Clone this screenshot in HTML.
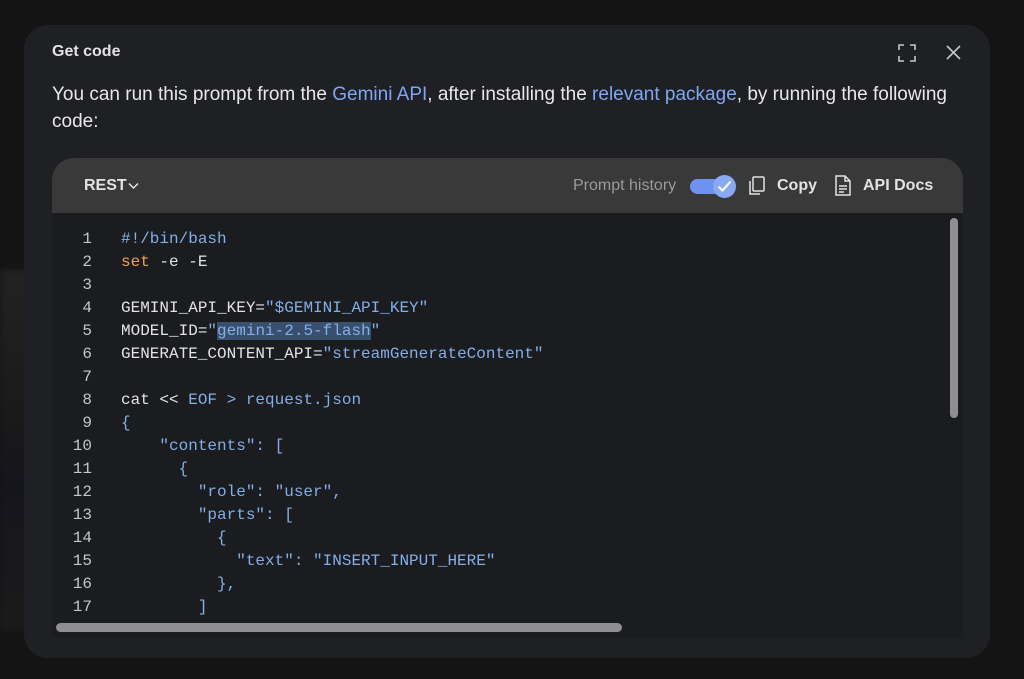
<!DOCTYPE html>
<html><head><meta charset="utf-8"><style>
*{margin:0;padding:0;box-sizing:border-box}
body{width:1024px;height:679px;background:#141414;font-family:"Liberation Sans",sans-serif;position:relative;overflow:hidden}
.blur{position:absolute;left:0;top:270px;width:30px;height:360px;background:linear-gradient(#222 0,#1a1a1a 40%,#15151c 60%,#1b1b1b 100%);filter:blur(3px)}
.dlg{position:absolute;left:24px;top:25px;width:966px;height:633px;background:#1f2023;border-radius:24px;overflow:hidden}
.title{position:absolute;left:28px;top:18px;font-size:16px;font-weight:bold;color:#e3e3e3}
.p{position:absolute;left:28px;top:56px;width:900px;font-size:19px;line-height:27px;color:#e8e8e8}
.p a{text-decoration:none;color:#7fa6f5}
.blk{position:absolute;left:28px;top:133px;width:911px;height:480px;background:#1b1c1f;border-radius:22px 22px 0 0;overflow:hidden}
.hdr{position:absolute;left:0;top:0;width:911px;height:55px;background:#393939}
.hdr span{position:absolute;top:19px;font-size:16px}
.view{position:absolute;left:0;top:55px;width:911px;height:405px;overflow:hidden}
.code{position:absolute;left:0;top:15px;font-family:"Liberation Mono",monospace;font-size:16px;line-height:23px;color:#e3e3e3;white-space:pre}
.ln{position:absolute;left:0;width:40px;text-align:right;color:#c4c7c5}
.b{color:#83aee8}.o{color:#f0a35c}
.hl{background:#38506e}
</style></head><body>
<div class="blur"></div>
<div class="dlg">
<div class="title">Get code</div>
<svg style="position:absolute;left:874px;top:19px" width="18" height="18" viewBox="0 0 18 18" fill="none" stroke="#c4c7c5" stroke-width="1.6"><path d="M1 6V1h5M12 1h5v5M17 12v5h-5M6 17H1v-5"/></svg>
<svg style="position:absolute;left:922px;top:20px" width="15" height="15" viewBox="0 0 15 15" stroke="#c4c7c5" stroke-width="1.6"><path d="M1 1l13 13M14 1L1 14"/></svg>
<div class="p">You can run this prompt from the <a>Gemini API</a>, after installing the <a>relevant package</a>, by running the following code:</div>
<div class="blk">
<div class="hdr">
<span style="left:32px;color:#e3e3e3;font-weight:bold">REST</span>
<svg style="position:absolute;left:76px;top:24px" width="11" height="8" viewBox="0 0 11 8" fill="none" stroke="#e3e3e3" stroke-width="1.5"><path d="M1 1.5l4.5 4.5 4.5-4.5"/></svg>
<span style="left:521px;color:#9a9a9a">Prompt history</span>
<div style="position:absolute;left:638px;top:21px;width:38px;height:15px;border-radius:8px;background:#6d93ef"></div>
<div style="position:absolute;left:661px;top:17px;width:23px;height:23px;border-radius:50%;background:#89a9f3"></div>
<svg style="position:absolute;left:665px;top:22px" width="15" height="13" viewBox="0 0 15 13" fill="none" stroke="#fff" stroke-width="2"><path d="M1.5 6.5l4 4 8-9"/></svg>
<svg style="position:absolute;left:696px;top:18px" width="18" height="20" viewBox="0 0 18 20" fill="none" stroke="#e3e3e3" stroke-width="1.5"><rect x="5" y="1" width="11" height="14" rx="1"/><path d="M2 5v13h10"/></svg>
<span style="left:725px;color:#e3e3e3;font-weight:bold">Copy</span>
<svg style="position:absolute;left:782px;top:17px" width="18" height="21" viewBox="0 0 18 21" fill="none" stroke="#e3e3e3" stroke-width="1.5"><path d="M2 1h9l5 5v14H2z M11 1v5h5 M5 11h8M5 14h8M5 17h5"/></svg>
<span style="left:811px;color:#e3e3e3;font-weight:bold">API Docs</span>
</div>
<div class="view"><div class="code">
<div class="ln" style="top:0">1
2
3
4
5
6
7
8
9
10
11
12
13
14
15
16
17
18</div><div style="position:absolute;left:69px;top:0"><span class="b">#!/bin/bash</span>
<span class="o">set</span> -e -E

GEMINI_API_KEY=<span class="b">"$GEMINI_API_KEY"</span>
MODEL_ID=<span class="b">"<span class="hl">gemini-2.5-flash</span>"</span>
GENERATE_CONTENT_API=<span class="b">"streamGenerateContent"</span>

cat &lt;&lt; <span class="b">EOF &gt; request.json</span>
<span class="b">{
    "contents": [
      {
        "role": "user",
        "parts": [
          {
            "text": "INSERT_INPUT_HERE"
          },
        ]</span></div>
</div></div>
<div style="position:absolute;left:898px;top:60px;width:8px;height:200px;border-radius:4px;background:#8e8e93"></div>
<div style="position:absolute;left:4px;top:465px;width:566px;height:9px;border-radius:5px;background:#8e8e93"></div>
</div>
</div>
</body></html>
